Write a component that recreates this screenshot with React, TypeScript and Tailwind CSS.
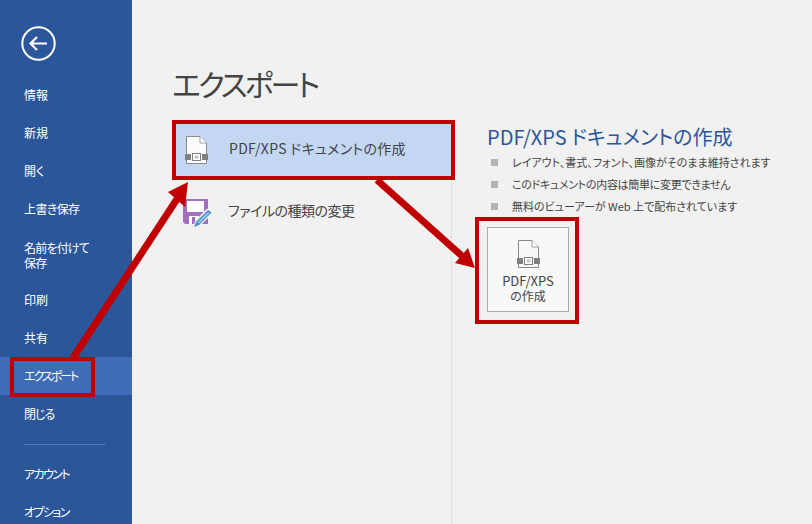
const font = "[font-family:'Noto_Sans_CJK_JP','Noto_Sans',sans-serif]";

const topItems = [
  { label: "情報", cls: "" },
  { label: "新規", cls: "" },
  { label: "開く", cls: "" },
  { label: "上書き保存", cls: "tracking-[-0.6px]" },
];
const midItems = [
  { label: "印刷", cls: "" },
  { label: "共有", cls: "" },
];

function NavItem({ label, cls, active }: { label: string; cls?: string; active?: boolean }) {
  return (
    <div
      className={`flex h-[38px] shrink-0 items-center pl-[24px] text-[12px] text-white [font-feature-settings:'palt'] ${cls ?? ""} ${
        active ? "bg-[#3e6db5]" : ""
      }`}
    >
      {label}
    </div>
  );
}

function PdfIcon({ fill }: { fill: string }) {
  return (
    <svg width="23" height="28" viewBox="0 0 23 28" fill="none" className="shrink-0">
      <path d="M1.5 .5H15L21.5 7V27.5H1.5Z" fill={fill} stroke="#8a8a8a" />
      <path d="M15 .5V7H21.5" fill="#ffffff" stroke="#a0a0a0" />
      <rect x="0" y="18" width="6" height="6" fill="#7f7f7f" />
      <rect x="17" y="18" width="6" height="6" fill="#7f7f7f" />
      <rect x="7.5" y="17.5" width="8" height="7" fill="#ffffff" stroke="#7f7f7f" />
      <rect x="9.5" y="19.5" width="4" height="3" fill="#c8c8c8" />
    </svg>
  );
}

function SaveAsIcon() {
  return (
    <svg width="30" height="30" viewBox="0 0 30 30" fill="none" className="mt-[6px] shrink-0">
      <path d="M0 1H25V26H2L0 24Z" fill="#a06fbd" />
      <rect x="4" y="3" width="17" height="11" fill="#ffffff" />
      <rect x="6" y="18" width="10" height="8" fill="#ffffff" />
      <rect x="9" y="19" width="3" height="7" fill="#a06fbd" />
      <path d="M9.5 30L12 23L24 10.5L30 15L17 28Z" fill="#f1f1f1" />
      <path d="M11 29L13 24L25 12L28.5 14.5L16 27Z" fill="#4a90cf" />
      <path d="M14.5 24.5L25 14L26.5 15L16 25.5Z" fill="#9cc6ea" />
    </svg>
  );
}

function Bullet({ text, cls }: { text: string; cls?: string }) {
  return (
    <li className="flex h-[22px] items-center">
      <span className="ml-[4px] mr-[14px] h-[7px] w-[7px] shrink-0 bg-[#b3b3b3]" />
      <span className={`text-[11px] text-[#444444] [font-feature-settings:'palt'] ${cls ?? ""}`}>{text}</span>
    </li>
  );
}

export default function App() {
  return (
    <div className={`relative flex h-[524px] w-[812px] overflow-hidden bg-[#f1f1f1] ${font}`}>
      <aside className="flex h-full w-[132px] shrink-0 flex-col bg-[#2b579a]">
        <div className="flex h-[76px] shrink-0 items-start pl-[21px] pt-[26px]">
          <svg width="35" height="35" viewBox="0 0 35 35" fill="none" stroke="#ffffff">
            <circle cx="17.5" cy="17.5" r="16.2" strokeWidth="2" />
            <path d="M26 17.5H10M16 11L9.5 17.5L16 24" strokeWidth="2.2" />
          </svg>
        </div>
        {topItems.map((t) => (
          <NavItem key={t.label} label={t.label} cls={t.cls} />
        ))}
        <div className="flex h-[53px] shrink-0 flex-col justify-center pl-[24px] text-[12px] leading-[15px] tracking-[-0.8px] text-white [font-feature-settings:'palt']">
          <div>名前を付けて</div>
          <div>保存</div>
        </div>
        {midItems.map((t) => (
          <NavItem key={t.label} label={t.label} cls={t.cls} />
        ))}
        <NavItem label="エクスポート" cls="tracking-[-2px]" active />
        <NavItem label="閉じる" cls="tracking-[-1px]" />
        <div className="ml-[24px] mb-[10px] mt-[11px] h-px w-[82px] shrink-0 bg-[#4a76b8]" />
        <NavItem label="アカウント" cls="tracking-[-1.6px]" />
        <NavItem label="オプション" cls="tracking-[-1.6px]" />
      </aside>

      <main className="flex min-w-0 flex-1 flex-col pl-[40px]">
        <h1 className="mt-[62px] h-[58px] shrink-0 text-[30px] leading-[42px] font-normal tracking-[-3px] text-[#444444] [font-feature-settings:'palt']">
          エクスポート
        </h1>
        <div className="flex flex-1">
          <div className="w-[280px] shrink-0 border-r border-[#e4e4e4]">
            <div className="flex h-[60px] items-center bg-[#c3d6f2] pl-[13px]">
              <PdfIcon fill="#fbfbfb" />
              <span className="mb-[3px] ml-[21px] text-[14px] tracking-[0.3px] text-[#444444] [font-feature-settings:'palt']">
                PDF/XPS ドキュメントの作成
              </span>
            </div>
            <div className="flex h-[60px] items-center pl-[11px]">
              <SaveAsIcon />
              <span className="ml-[15px] text-[14px] tracking-[-0.5px] text-[#444444] [font-feature-settings:'palt']">
                ファイルの種類の変更
              </span>
            </div>
          </div>
          <div className="flex-1 pl-[35px]">
            <h2 className="mt-[3px] text-[20px] leading-[28px] font-normal text-[#2b579a] [font-feature-settings:'palt']">
              PDF/XPS ドキュメントの作成
            </h2>
            <ul>
              <Bullet text="レイアウト、書式、フォント、画像がそのまま維持されます" />
              <Bullet text="このドキュメントの内容は簡単に変更できません" cls="tracking-[-0.3px]" />
              <Bullet text="無料のビューアーが Web 上で配布されています" />
            </ul>
            <button className="mt-[10px] flex h-[85px] w-[82px] flex-col items-center border border-[#ababab] bg-[#f8f8f8] pt-[12px] text-[12px] leading-[15px] text-[#444444] [font-feature-settings:'palt']">
              <PdfIcon fill="#f8f8f8" />
              <div className="mt-[5px] text-[13px]">PDF/XPS</div>
              <div>の作成</div>
            </button>
          </div>
        </div>
      </main>

      {/* 注釈の赤枠と矢印 */}
      <div className="absolute left-[172px] top-[120px] h-[60px] w-[283px] border-[4px] border-[#c00000]" />
      <div className="absolute left-[10px] top-[357px] h-[40px] w-[85px] border-[4px] border-[#c00000]" />
      <div className="absolute left-[475px] top-[217px] h-[107px] w-[104px] border-[4px] border-[#c00000]" />
      <svg className="absolute left-0 top-0" width="812" height="524" viewBox="0 0 812 524" fill="none">
        <path d="M73 358L177 199" stroke="#c00000" strokeWidth="7" />
        <path d="M188 182L168 192L185 207Z" fill="#c00000" />
        <path d="M377 180L462 256" stroke="#c00000" strokeWidth="7" />
        <path d="M475 268L468 248L455 263Z" fill="#c00000" />
      </svg>
    </div>
  );
}
